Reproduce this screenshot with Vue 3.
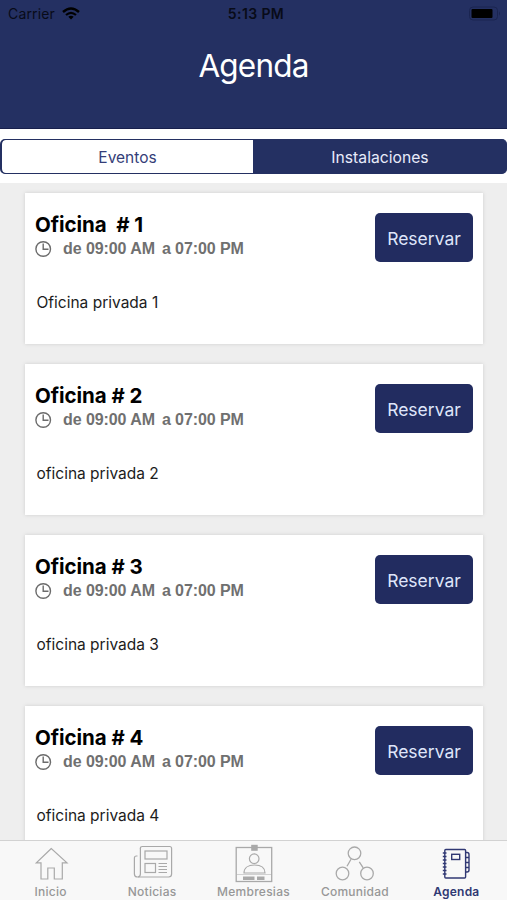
<template>
	<div class="page">
		<header class="header">
			<div class="status">
				<div class="status-left">
					<span class="carrier">Carrier</span>
					<svg class="wifi" width="18" height="13" viewBox="0 0 18 13">
						<path d="M1 5 Q9 -2 17 5" fill="none" stroke="#000" stroke-width="2.4" />
						<path d="M4 8 Q9 3.6 14 8" fill="none" stroke="#000" stroke-width="2.2" />
						<path d="M6.3 9.8 Q9 7.6 11.7 9.8 L9 12.6 Z" fill="#000" />
					</svg>
				</div>
				<span class="clock">5:13 PM</span>
				<svg class="battery" width="34" height="15" viewBox="0 0 34 15">
					<rect x="1.5" y="1" width="28" height="13" rx="3.5" fill="none" stroke="#1a2450" />
					<rect x="3.5" y="3" width="21" height="9" rx="1" fill="#000" />
					<path d="M31 5.5 Q33 7.5 31 9.5 Z" fill="#1a2450" />
				</svg>
			</div>
			<h1 class="title">Agenda</h1>
		</header>

		<div class="segment-wrap">
			<div class="segment">
				<button
					v-for="item in segments"
					:key="item"
					class="segment-item"
					:class="{ active: item === segment }"
					@click="segment = item"
				>
					{{ item }}
				</button>
			</div>
		</div>

		<main class="list">
			<article v-for="office in offices" :key="office.name" class="card">
				<div class="card-info">
					<h2 class="card-title">{{ office.name }}</h2>
					<div class="card-time">
						<svg width="17" height="17" viewBox="0 0 17 17" fill="none" stroke="#6b6b6b" stroke-width="1.4">
							<circle cx="8.2" cy="8" r="7.3" />
							<path d="M8.2 2.5 V8.3 H13.5" />
						</svg>
						<span class="from">de 09:00 AM</span>
						<span class="to">a 07:00 PM</span>
					</div>
					<p class="card-desc">{{ office.desc }}</p>
				</div>
				<button class="reserve">Reservar</button>
			</article>
		</main>

		<nav class="tabbar">
			<a v-for="tab in tabs" :key="tab.key" class="tab" :class="[tab.key, { current: tab.key === 'agenda' }]">
				<svg width="44" height="42" viewBox="0 0 44 42" fill="none" stroke="currentColor">
					<path
						v-if="tab.key === 'inicio'"
						d="M22.3 7.5 L7.3 21.8 H12 V38 H18.8 V27 H25.3 V38 H33.3 V21.8 H38 Z"
						stroke-width="1.2"
					/>
					<g v-else-if="tab.key === 'noticias'" stroke-width="1.2">
						<path d="M10.4 7.5 Q10.4 5.5 12.4 5.5 H39.6 Q41.6 5.5 41.6 7.5 V33 Q41.6 36 38.6 36 H7.4 Q4.4 36 4.4 33 V17 Q4.4 15 6.4 15 H7.5" />
						<path d="M10.4 7 V33 Q10.4 35.5 8 36" />
						<rect x="15" y="10" width="22" height="8" />
						<rect x="15" y="22.5" width="10.5" height="9" />
						<path d="M28.5 22.5 H37 M28.5 25.5 H37 M28.5 28.5 H37 M28.5 31.5 H37" />
					</g>
					<g v-else-if="tab.key === 'membresias'">
						<rect x="4.2" y="6.5" width="35.5" height="34" stroke-width="1.3" />
						<rect x="19.2" y="3.8" width="6.5" height="6" fill="currentColor" stroke="none" />
						<circle cx="22.2" cy="17.7" r="4.8" stroke-width="1.2" />
						<path d="M12 32 C12 27 16 24 22.4 24 C29 24 33 27 33 32 Z" stroke-width="1.2" />
						<path d="M5 33.5 H40" stroke-opacity=".5" />
						<path d="M11 37.3 H22.5 M25 37.3 H32.5" stroke-width="3.4" />
					</g>
					<g v-else-if="tab.key === 'comunidad'" stroke-width="1.3">
						<circle cx="21.5" cy="12.3" r="6.3" />
						<circle cx="9.5" cy="32.5" r="6.3" />
						<circle cx="34" cy="32.5" r="6.3" />
						<path d="M18 18.2 L14 25.2 M26.3 20.8 L30.2 26.8" />
					</g>
					<g v-else stroke-width="1.4">
						<rect x="10.8" y="8.5" width="20.8" height="28.5" rx="1" />
						<rect x="17.7" y="13.3" width="8" height="5.2" />
						<path
							d="M8.8 12 H12.5 M8.8 15.5 H12.5 M8.8 19 H12.5 M8.8 22.5 H12.5 M8.8 26 H12.5 M8.8 29.5 H12.5 M8.8 33 H12.5"
							stroke-width="1.5"
						/>
						<path d="M32 11.5 H33 Q35 11.5 35 13.5 V16.5 H32 M35 16.5 V21.5 H32 M35 21.5 V26.5 H32 M35 26.5 V29 Q35 31 33 31 H32" />
					</g>
				</svg>
				<span class="tab-label">{{ tab.label }}</span>
			</a>
		</nav>
	</div>
</template>

<script setup>
	import { ref } from 'vue'

	const segments = ['Eventos', 'Instalaciones']
	const segment = ref('Instalaciones')

	const offices = [
		{ name: 'Oficina  # 1', desc: 'Oficina privada 1' },
		{ name: 'Oficina # 2', desc: 'oficina privada 2' },
		{ name: 'Oficina # 3', desc: 'oficina privada 3' },
		{ name: 'Oficina # 4', desc: 'oficina privada 4' }
	]

	const tabs = [
		{ key: 'inicio', label: 'Inicio' },
		{ key: 'noticias', label: 'Noticias' },
		{ key: 'membresias', label: 'Membresias' },
		{ key: 'comunidad', label: 'Comunidad' },
		{ key: 'agenda', label: 'Agenda' }
	]
</script>

<style>
	body {
		margin: 0;
		background: #eee;
	}
</style>

<style scoped>
	.page {
		display: flex;
		flex-direction: column;
		height: 900px;
		overflow: hidden;
		font-family: Inter, 'Liberation Sans', sans-serif;
		background: #eee;
	}
	button {
		font-family: inherit;
		margin: 0;
		padding: 0;
		border: 0;
	}
	.header {
		flex: none;
		box-sizing: border-box;
		height: 129px;
		background: #243062;
		border-bottom: 1px solid #171f4c;
	}
	.status {
		display: grid;
		grid-template-columns: 1fr auto 1fr;
		align-items: center;
		height: 27px;
		padding: 0 5px 0 8px;
		font-size: 14px;
		color: #080b18;
	}
	.status-left {
		display: flex;
		align-items: center;
		gap: 7px;
	}
	.carrier {
		letter-spacing: 0.15px;
	}
	.clock {
		margin-left: 2px;
		font-weight: 600;
		font-size: 14px;
		letter-spacing: 0.4px;
	}
	.battery {
		justify-self: end;
	}
	.title {
		margin: 19px 0 0;
		font-size: 31.5px;
		line-height: 40px;
		letter-spacing: -0.8px;
		font-weight: 400;
		text-align: center;
		color: #fff;
	}
	.segment-wrap {
		flex: none;
		box-sizing: border-box;
		height: 54px;
		padding-top: 10px;
		background: #fff;
	}
	.segment {
		display: flex;
		box-sizing: border-box;
		height: 35px;
		border: 1px solid #243062;
		border-left-width: 2px;
		border-radius: 5px;
		background: #243062;
		overflow: hidden;
	}
	.segment-item {
		width: 251px;
		padding-top: 1px;
		font-size: 15.5px;
		color: #343d78;
		background: #fff;
		border-radius: 4px 0 0 4px;
	}
	.segment-item.active {
		flex: 1;
		padding-left: 1px;
		font-size: 15.7px;
		color: #e8ebfa;
		background: #243062;
	}
	.list {
		flex: 1;
		min-height: 0;
		display: flex;
		flex-direction: column;
		gap: 20px;
		padding: 10px 24px 0 25px;
		overflow: hidden;
	}
	.card {
		flex: none;
		display: flex;
		justify-content: space-between;
		align-items: flex-start;
		box-sizing: border-box;
		height: 151px;
		padding: 20px 10px 0;
		background: #fff;
		box-shadow: 0 0 4px rgba(0, 0, 0, 0.13);
	}
	.card-title {
		margin: 0;
		font-size: 20.5px;
		line-height: 24px;
		font-weight: 650;
		letter-spacing: -0.05px;
		white-space: pre;
		color: #000;
	}
	.card-time {
		display: flex;
		align-items: center;
		height: 22px;
		margin-top: 1px;
		font: bold 16px/22px 'Liberation Sans', sans-serif;
		color: #707070;
	}
	.from {
		margin-left: 11px;
		letter-spacing: -0.08px;
	}
	.to {
		margin-left: 7px;
		letter-spacing: -0.08px;
	}
	.card-desc {
		margin: 33px 0 0 1.5px;
		font-size: 15.5px;
		line-height: 20px;
		color: #1c1c1c;
	}
	.reserve {
		width: 98px;
		height: 49px;
		padding-top: 1px;
		font-size: 17.5px;
		color: #dfe5fa;
		background: #222c60;
		border-radius: 5px;
	}
	.tabbar {
		flex: none;
		display: flex;
		box-sizing: border-box;
		height: 60px;
		border-top: 1px solid #d2d2d2;
		background: #f8f8f8;
	}
	.tab {
		flex: 1;
		display: flex;
		flex-direction: column;
		align-items: center;
		min-width: 0;
		color: #a9a9a9;
	}
	.tab svg {
		flex: none;
	}
	.tab-label {
		margin-top: 1px;
		font-size: 12px;
		line-height: 16px;
		font-weight: 500;
		letter-spacing: 0.25px;
		color: #979797;
	}
	.tab.current {
		color: #303873;
	}
	.current .tab-label {
		font-weight: 600;
		color: #303873;
	}
</style>
